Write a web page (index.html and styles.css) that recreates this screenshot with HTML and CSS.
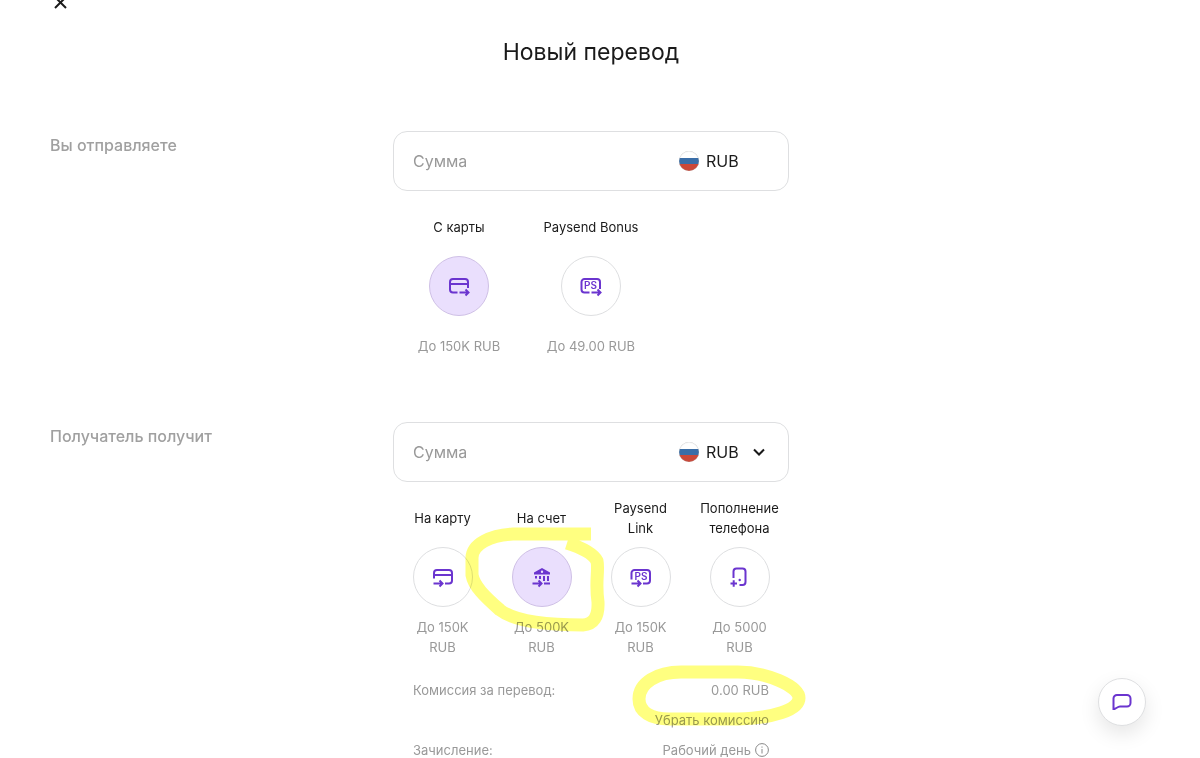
FILE: index.html
```html
<!DOCTYPE html>
<html lang="ru">
<head>
  <meta charset="UTF-8" />
  <meta name="viewport" content="width=device-width, initial-scale=1.0" />
  <title>Новый перевод</title>
  <link rel="stylesheet" href="styles.css">
</head>
<body>
  <div class="page">
    <header class="header">
      <button class="close" type="button" aria-label="Закрыть">
        <svg width="20" height="20" viewBox="0 0 20 20"><path d="M5 5l11 11M16 5L5 16" /></svg>
      </button>
      <h1>Новый перевод</h1>
    </header>

    <main>
      <section class="row">
        <h2><label for="sendAmount">Вы отправляете</label></h2>
        <div class="content">
          <div class="field">
            <input type="text" id="sendAmount" placeholder="Сумма" />
            <div class="currency">
              <span class="flag"></span>
              <span>RUB</span>
            </div>
          </div>
          <div class="methods methods-send">
            <button class="method active" type="button">
              <span class="name">С карты</span>
              <span class="circle">
                <svg class="icon" viewBox="0 0 24 24">
                  <path d="M10.500 18.500H6a3 3 0 0 1-3-3V8a3 3 0 0 1 3-3h12a3 3 0 0 1 3 3v6" />
                  <path class="thick" d="M3 10h18" />
                  <path d="M12.500 18.500h8.500M18.500 15.500l3 3-3 3" />
                </svg>
              </span>
              <span class="limit">До 150K RUB</span>
            </button>
            <button class="method" type="button">
              <span class="name">Paysend Bonus</span>
              <span class="circle">
                <svg class="icon" viewBox="0 0 24 24">
                  <path d="M10.500 18.500H5.500a3 3 0 0 1-3-3V8a3 3 0 0 1 3-3h12.500a3 3 0 0 1 3 3v7" />
                  <text x="5" y="15">PS</text>
                  <path d="M12.500 18.500h8.500M18.500 15.500l3 3-3 3" />
                </svg>
              </span>
              <span class="limit">До 49.00 RUB</span>
            </button>
          </div>
        </div>
      </section>

      <section class="row">
        <h2><label for="receiveAmount">Получатель получит</label></h2>
        <div class="content">
          <div class="field">
            <input type="text" id="receiveAmount" placeholder="Сумма" />
            <div class="currency">
              <span class="flag"></span>
              <select aria-label="Валюта получения">
                <option>RUB</option>
              </select>
              <svg class="chevron" width="12" height="8" viewBox="0 0 12 8"><path d="M1 1.500l5 5 5-5" /></svg>
            </div>
          </div>
          <div class="methods methods-receive">
            <button class="method" type="button">
              <span class="name">На карту</span>
              <span class="circle">
                <svg class="icon" viewBox="0 0 24 24">
                  <path d="M3 13.500V8a3 3 0 0 1 3-3h12a3 3 0 0 1 3 3v7.500a3 3 0 0 1-3 3h-4" />
                  <path class="thick" d="M3 10h18" />
                  <path d="M2.500 18.500h8.500M8.500 15.500l3 3-3 3" />
                </svg>
              </span>
              <span class="limit">До 150K RUB</span>
            </button>
            <button class="method active" type="button">
              <span class="name">На счет</span>
              <span class="circle">
                <svg class="icon" viewBox="0 0 24 24">
                  <path class="solid" fill-rule="evenodd" d="M12 3L20 7.500V9.500H4V7.500zM12 5.500a1.200 1.200 0 1 0 0 2.400a1.200 1.200 0 0 0 0-2.400z" />
                  <path d="M6 11v2.500M10 11v3M14 11v5M18 11v5" />
                  <path d="M2.500 18.500h8.500M8.500 15.500l3 3-3 3M14 18.500h6" />
                </svg>
              </span>
              <span class="limit">До 500K RUB</span>
            </button>
            <button class="method" type="button">
              <span class="name">Paysend Link</span>
              <span class="circle">
                <svg class="icon" viewBox="0 0 24 24">
                  <path d="M2.500 14.500V8a3 3 0 0 1 3-3h12.500a3 3 0 0 1 3 3v7.500a3 3 0 0 1-3 3h-4" />
                  <text x="5.500" y="15">PS</text>
                  <path d="M2.500 18.500h8.500M8.500 15.500l3 3-3 3" />
                </svg>
              </span>
              <span class="limit">До 150K RUB</span>
            </button>
            <button class="method" type="button">
              <span class="name">Пополнение телефона</span>
              <span class="circle">
                <svg class="icon" viewBox="0 0 24 24">
                  <path d="M5.500 13V6.500a3 3 0 0 1 3-3H14.500a3 3 0 0 1 3 3V17a3 3 0 0 1-3 3h-3" />
                  <path d="M2.500 18.500h6.500M5.700 15.300v6.500" />
                  <circle class="solid" cx="11.700" cy="15" r="1.200" />
                </svg>
              </span>
              <span class="limit">До 5000 RUB</span>
            </button>
          </div>

          <dl class="details">
            <dt>Комиссия за перевод:</dt>
            <dd>0.00 RUB</dd>
            <dd class="remove"><a href="#">Убрать комиссию</a></dd>
            <dt>Зачисление:</dt>
            <dd class="term">Рабочий день
              <svg class="info" width="14" height="14" viewBox="0 0 14 14"><circle cx="7" cy="7" r="6.400" /><path d="M7 6v4.500M7 3.500v1.200" /></svg>
            </dd>
          </dl>

          <!-- yellow marker strokes -->
          <svg class="marker" width="430" height="320" viewBox="0 0 430 320">
            <path d="M198 112H120C98 113 79 122 79 136V153C81 164 91 174 107 188C121 199 150 203 190 203Q206 202 205 180C202 160 206 148 204 139Q199 129 174 121" />
            <path d="M246 277C246 261 264 250 288 250H345C373 250 406 264 406 276C406 288 380 296 345 297H276C258 297 246 290 246 277Z" />
          </svg>
        </div>
      </section>
    </main>

    <button class="chat" type="button" aria-label="Чат">
      <svg class="icon" viewBox="0 0 24 24"><path d="M3.500 19V8.500a3.500 3.500 0 0 1 3.500-3.500h10a3.500 3.500 0 0 1 3.500 3.500v4.500a3.500 3.500 0 0 1-3.500 3.500H10c-2 0-4 2-5.500 2.500z" /></svg>
    </button>
  </div>
</body>
</html>
```

FILE: styles.css
```css
* {
  box-sizing: border-box;
}
body {
  margin: 0;
  font-family: Inter, "Noto Sans", sans-serif;
  font-size: 13px;
  line-height: 20px;
  color: #1a1a1a;
  background-color: #fff;
}
button, input, select {
  font: inherit;
  color: inherit;
  margin: 0;
  padding: 0;
  border: 0;
  background: none;
}
button {
  cursor: pointer;
}
.page {
  height: 100vh;
  overflow: hidden;
  padding: 0 68px 0 50px;
}
.header {
  display: flex;
  flex-direction: column;
  margin-top: -8px;
}
.close {
  width: 20px;
  height: 20px;
}
.close svg {
  display: block;
  fill: none;
  stroke: #1a1a1a;
  stroke-width: 2;
}
h1 {
  margin: 24px 0 63px;
  font-size: 23px;
  line-height: 32px;
  font-weight: 400;
  text-align: center;
}
.row {
  display: grid;
  grid-template-columns: 1fr 396px 1fr;
  margin-bottom: 56px;
}
h2 {
  margin: 4px 0 0;
  font-size: 16px;
  line-height: 20px;
  font-weight: 500;
  color: #a0a0a0;
}
.content {
  position: relative;
}
.field {
  display: flex;
  align-items: center;
  height: 60px;
  padding-left: 19px;
  border: 1px solid #dedfe1;
  border-radius: 14px;
}
.field input {
  flex: 1;
  min-width: 0;
  font-size: 16px;
  outline: none;
}
.field input::placeholder {
  color: #999;
  opacity: 1;
}
.currency {
  display: flex;
  align-items: center;
  width: 109px;
  font-size: 16px;
}
.currency select {
  appearance: none;
  width: 47px;
}
.flag {
  width: 20px;
  height: 20px;
  margin-right: 7px;
  border-radius: 50%;
  background: linear-gradient(#fff 33%, #3a6ea8 33%, #3a6ea8 66%, #cc4838 66%);
  box-shadow: inset 0 0 1px #999;
}
.chevron {
  fill: none;
  stroke: #1a1a1a;
  stroke-width: 2;
}
.methods {
  display: grid;
  margin-top: 16px;
}
.methods-send {
  grid-template-columns: repeat(3, 1fr);
}
.methods-receive {
  grid-template-columns: repeat(4, 1fr);
}
.method {
  display: flex;
  flex-direction: column;
  align-items: center;
}
.name, .limit {
  display: flex;
  align-items: center;
  height: 40px;
}
.methods-receive .name {
  max-width: 80px;
}
.limit {
  color: #999;
}
.methods-receive .limit {
  max-width: 60px;
}
.circle {
  display: flex;
  align-items: center;
  justify-content: center;
  width: 60px;
  height: 60px;
  margin: 9px 0 10px;
  border: 1px solid #dedfe1;
  border-radius: 50%;
}
.active .circle {
  background-color: #eadffd;
  border-color: #cfc0e6;
}
.icon {
  width: 24px;
  height: 24px;
  fill: none;
  stroke: #6b35cf;
  stroke-width: 2;
}
.icon .thick {
  stroke-width: 2;
}
.icon .solid, .icon text {
  fill: #6b35cf;
  stroke: none;
}
.icon text {
  font-size: 10px;
  font-weight: 600;
}
.details {
  display: grid;
  grid-template-columns: 1fr auto;
  row-gap: 10px;
  margin: 23px 20px 0;
  color: #999;
}
.details dd {
  margin: 0;
  text-align: right;
}
.details .remove {
  grid-column: 1 / 3;
}
.details a {
  color: inherit;
  text-decoration: none;
}
.term {
  display: flex;
  align-items: center;
  gap: 4px;
}
.info {
  fill: none;
  stroke: #888;
}
.marker {
  position: absolute;
  top: 0;
  left: 0;
  fill: none;
  stroke: #ffff80;
  stroke-width: 13;
  mix-blend-mode: multiply;
  pointer-events: none;
}
.chat {
  position: fixed;
  right: 54px;
  bottom: 32px;
  display: flex;
  align-items: center;
  justify-content: center;
  width: 48px;
  height: 48px;
  background-color: #fff;
  border: 1px solid #dedfe1;
  border-radius: 50%;
  box-shadow: 0 8px 20px rgba(0,0,0,0.1);
}
```
